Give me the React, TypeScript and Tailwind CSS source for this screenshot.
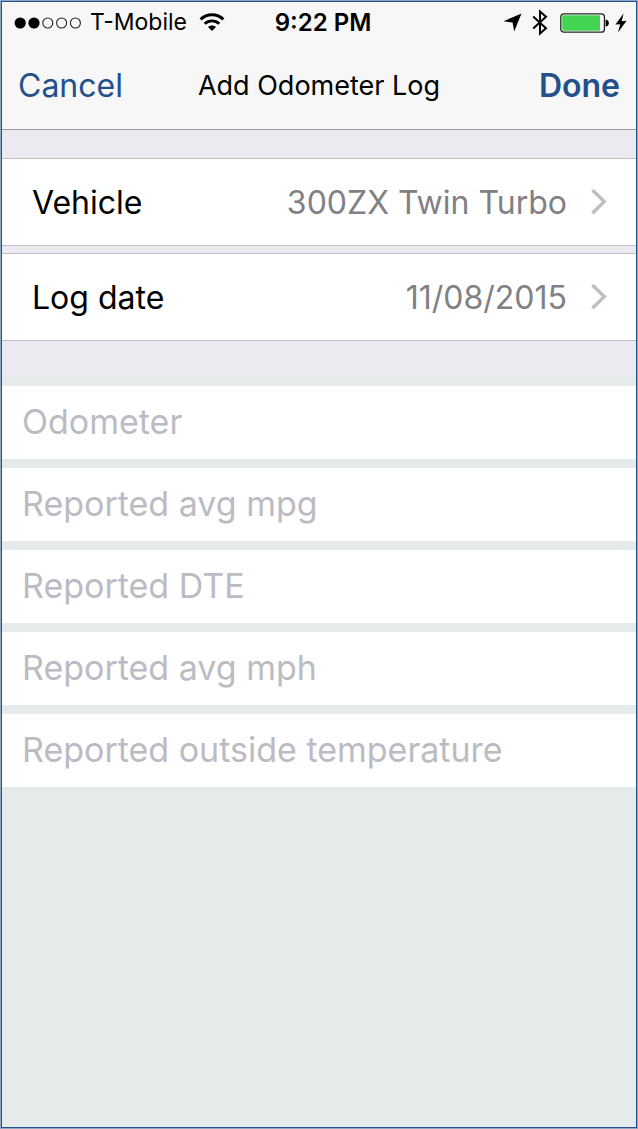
import { useState } from "react";

const fields = [
  { id: "odometer", label: "Odometer" },
  { id: "avg-mpg", label: "Reported avg mpg" },
  { id: "dte", label: "Reported DTE" },
  { id: "avg-mph", label: "Reported avg mph" },
  { id: "outside-temp", label: "Reported outside temperature" },
];

function SignalDots() {
  return (
    <svg width="68" height="12" viewBox="0 0 68 12" aria-label="Signal strength 2 of 5">
      {[0, 1].map((i) => (
        <circle key={i} cx={6.2 + i * 13.8} cy="6" r="5.6" fill="#000" />
      ))}
      {[2, 3, 4].map((i) => (
        <circle key={i} cx={6.2 + i * 13.8} cy="6" r="5" fill="none" stroke="#222" strokeWidth="1.1" />
      ))}
    </svg>
  );
}

function WifiIcon() {
  return (
    <svg width="26" height="19" viewBox="0 0 26 19" fill="none" stroke="#000" aria-label="Wi-Fi">
      <path d="M1.6 6.4C8 .2 18 .2 24.4 6.4" strokeWidth="3" />
      <path d="M5.7 10.8C9.8 6.9 16.2 6.9 20.3 10.8" strokeWidth="2.8" />
      <path d="M13 18 9 14C11.3 12 14.7 12 17 14Z" fill="#000" stroke="none" />
    </svg>
  );
}

function LocationIcon() {
  return (
    <svg width="19" height="19" viewBox="0 0 19 19" aria-label="Location in use">
      <path d="M18.5.5 11.2 18.5 9.6 9.6.5 8.3Z" fill="#000" />
    </svg>
  );
}

function BluetoothIcon() {
  return (
    <svg width="16" height="27" viewBox="0 0 16 27" fill="none" stroke="#000" strokeWidth="2" aria-label="Bluetooth">
      <path d="M1.2 7.4 14 19.2 8 24.6V2.4L14 7.8 1.2 19.6" />
    </svg>
  );
}

function BatteryIcon() {
  return (
    <svg width="49" height="20" viewBox="0 0 49 20" aria-label="Battery charging">
      <rect x=".8" y=".8" width="43.6" height="18.4" rx="3" fill="#fff" stroke="#222" strokeWidth="1.3" />
      <rect x="2.2" y="2.2" width="37.8" height="15.6" rx="1" fill="#43d551" />
      <path d="M45.6 6.4C50 7 50 13 45.6 13.6Z" fill="#000" />
    </svg>
  );
}

function BoltIcon() {
  return (
    <svg width="12" height="20" viewBox="0 0 12 20" aria-label="Charging">
      <path d="M8.6.4.4 11.6 5.2 11.2 3 19.6 11.6 7.8 6.7 8.2Z" fill="#000" />
    </svg>
  );
}

function Chevron() {
  return (
    <svg width="16" height="26" viewBox="0 0 16 26" fill="none" stroke="#bdbdc5" strokeWidth="3.4" aria-hidden="true">
      <path d="M1.4 1 13.2 12.6 1.4 24.2" />
    </svg>
  );
}

function PickerRow({ label, value }: { label: string; value: string }) {
  return (
    <button
      type="button"
      className="flex h-22 w-full items-center border-y border-[#c1c0c6] bg-white pr-[29px] pl-[30px] text-[32px] leading-10"
    >
      <span className="pt-0.5 text-black">{label}</span>
      <span className="mr-6 ml-auto pt-0.5 text-[#808085]">{value}</span>
      <Chevron />
    </button>
  );
}

export default function App() {
  const [values, setValues] = useState<Record<string, string>>({});

  return (
    <div className="min-h-screen border border-[#8fa7c6] font-[Inter,sans-serif]">
      <div className="flex min-h-[calc(100vh-2px)] flex-col border border-[#24528c] bg-[#e5ebeb]">
        <header className="border-b border-[#9b9b9e] bg-[#f7f7f7]">
          <div className="grid h-[41px] grid-cols-[1fr_auto_1fr] items-center pr-2 pl-3 text-black">
            <div className="flex items-center text-[23px]">
              <SignalDots />
              <span className="mr-3 ml-2">T-Mobile</span>
              <WifiIcon />
            </div>
            <span className="pl-1 text-2xl font-semibold">9:22 PM</span>
            <div className="flex items-center justify-end">
              <LocationIcon />
              <span className="ml-2.5 flex"><BluetoothIcon /></span>
              <span className="ml-3 flex"><BatteryIcon /></span>
              <span className="mr-px ml-1.5 flex"><BoltIcon /></span>
            </div>
          </div>
          <div className="grid h-[86px] grid-cols-[1fr_auto_1fr] items-center px-4">
            <button type="button" className="justify-self-start text-[32px] leading-10 text-[#22508a]">
              Cancel
            </button>
            <h1 className="text-[27px] leading-10 text-black">Add Odometer Log</h1>
            <button type="button" className="justify-self-end text-[32px] leading-10 font-semibold text-[#22508a]">
              Done
            </button>
          </div>
        </header>
        <main>
          <section className="flex flex-col gap-[7px] bg-[#ebeaf0] pt-7 pb-[35px]">
            <PickerRow label="Vehicle" value="300ZX Twin Turbo" />
            <PickerRow label="Log date" value="11/08/2015" />
          </section>
          <form className="flex flex-col gap-[9px] pt-[10px]">
            {fields.map((f) => (
              <input
                key={f.id}
                id={f.id}
                name={f.id}
                type="text"
                aria-label={f.label}
                placeholder={f.label}
                value={values[f.id] ?? ""}
                onChange={(e) => setValues({ ...values, [f.id]: e.target.value })}
                className="h-[73px] w-full bg-white px-5 pb-0.5 text-[34px] text-black outline-none placeholder:text-[#bcbbc3]"
              />
            ))}
          </form>
        </main>
      </div>
    </div>
  );
}
